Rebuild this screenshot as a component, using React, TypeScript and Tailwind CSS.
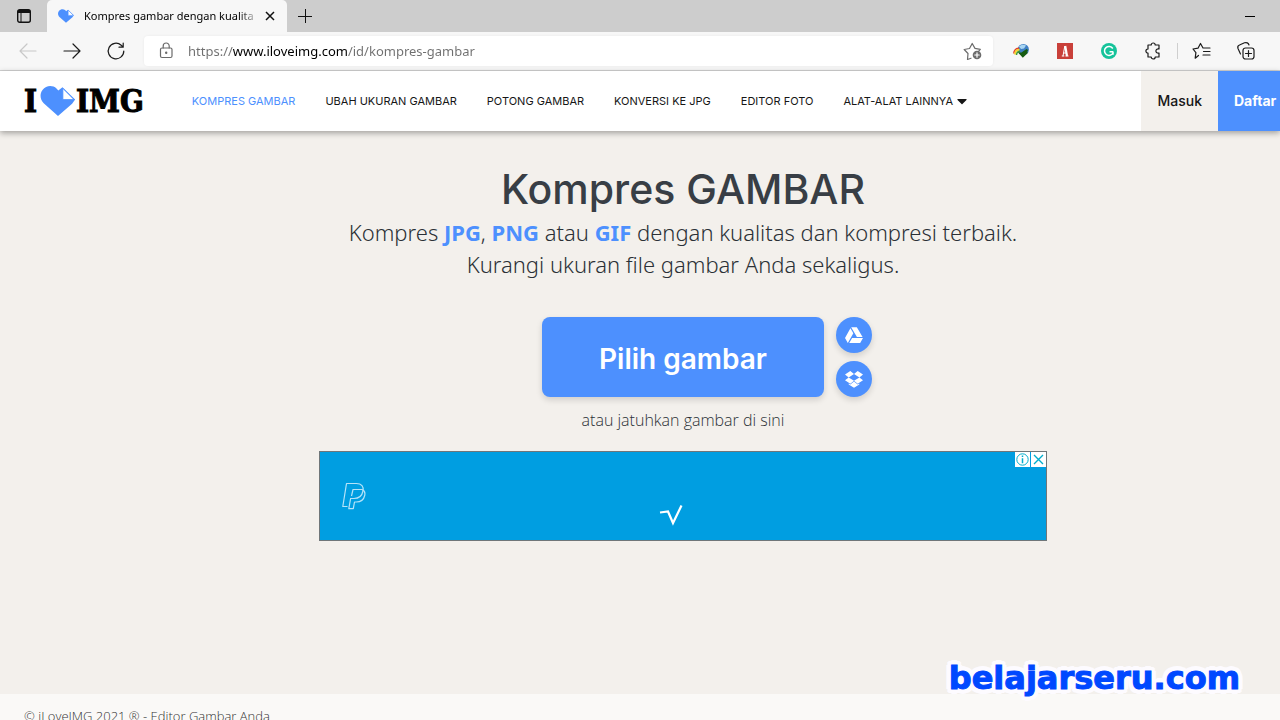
import type { ReactNode } from "react";
import { FaCaretDown, FaGoogleDrive } from "react-icons/fa";

const navLinks = [
  "UBAH UKURAN GAMBAR",
  "POTONG GAMBAR",
  "KONVERSI KE JPG",
  "EDITOR FOTO",
];

function Heart({ className }: { className?: string }) {
  return (
    <svg viewBox="0 0 35 30" className={className} aria-hidden="true">
      <path
        d="M17.5 30 3.2 17.2C-.6 13.6-.9 7.6 2 3.9 5.600-.6 12-1.100 16 2.500l1.800 2L22 1.200l12.600 12.300-3 4.200z"
        fill="#4d90fe"
      />
      <path d="M22.300 2.300v11.400h11.400z" fill="#fff" stroke="#4d90fe" strokeWidth="1" />
    </svg>
  );
}

function Stroke({ className, children }: { className?: string; children: ReactNode }) {
  return (
    <svg
      viewBox="0 0 20 20"
      className={className ?? "size-5"}
      fill="none"
      stroke="currentColor"
      strokeWidth="1.200"
      strokeLinecap="round"
      strokeLinejoin="round"
      aria-hidden="true"
    >
      {children}
    </svg>
  );
}

function IconButton({ label, children }: { label: string; children: ReactNode }) {
  return (
    <button type="button" aria-label={label} className="flex size-5 items-center justify-center">
      {children}
    </button>
  );
}

function TabStrip() {
  return (
    <div className="flex h-8 items-end bg-[#cdcdcd]">
      <div className="flex h-8 w-[47px] shrink-0 items-center justify-center">
        <IconButton label="Menu tindakan tab">
          <svg viewBox="0 0 14 14" className="size-3.5" aria-hidden="true">
            <rect x=".7" y=".7" width="12.600" height="12.600" rx="2" fill="none" stroke="#111" strokeWidth="1.400" />
            <path d="M1 1h12v3H1z" fill="#111" />
            <path d="M4 4v9" stroke="#111" strokeWidth="1" />
          </svg>
        </IconButton>
      </div>
      <div className="flex h-8 w-60 items-center rounded-t-[5px] bg-[#f7f7f7] pr-[7px] pl-[11px]">
        <Heart className="h-3.5 w-4 shrink-0" />
        <span className="ml-2.5 min-w-0 flex-1 font-['Noto_Sans',sans-serif] text-[11px] whitespace-nowrap text-black [mask-image:linear-gradient(to_right,#000_88%,transparent)]">
          Kompres gambar dengan kualita
        </span>
        <span className="flex">
          <IconButton label="Tutup tab">
            <svg viewBox="0 0 10 10" className="size-2.5" stroke="#111" strokeWidth="1.500" aria-hidden="true">
              <path d="m1 1 8 8M9 1 1 9" />
            </svg>
          </IconButton>
        </span>
      </div>
      <div className="flex h-8 flex-1 items-center justify-between pr-5 pl-2">
        <IconButton label="Tab baru">
          <svg viewBox="0 0 14 14" className="size-3.5" stroke="#111" strokeWidth="1" aria-hidden="true">
            <path d="M7.500 0v14M0 7.500h14" />
          </svg>
        </IconButton>
        <button type="button" aria-label="Minimalkan" className="flex h-5 w-5 items-center justify-center">
          <span className="h-px w-2.5 bg-black" />
        </button>
      </div>
    </div>
  );
}

function Toolbar() {
  return (
    <div className="flex h-[39px] items-center border-b border-[#d2d2d2] bg-[#f7f7f7] pr-6 pl-[18px] text-[#1b1b1b]">
      <div className="flex gap-6">
        <button type="button" aria-label="Kembali" className="text-[#c8c8c8]">
          <Stroke><path d="M18 10H2.500M9 3l-7 7 7 7" /></Stroke>
        </button>
        <button type="button" aria-label="Maju">
          <Stroke><path d="M2 10h15.500M11 3l7 7-7 7" /></Stroke>
        </button>
        <button type="button" aria-label="Muat ulang">
          <Stroke><path d="M17.800 10A7.800 7.800 0 1 1 15.200 4.200L17 6M17.200 2v4.200H13" /></Stroke>
        </button>
      </div>
      <div className="ml-[18px] flex h-[30px] flex-1 items-center rounded bg-white pr-2.5 pl-3 shadow-[0_0_3px_rgba(0,0,0,0.06)]">
        <Stroke className="size-5 shrink-0 text-[#6b6b6b]">
          <rect x="4.500" y="7" width="11.500" height="9.500" rx="1.500" />
          <path d="M7.200 7V5a3 3 0 0 1 6 0v2" />
          <circle cx="10.200" cy="11.700" r=".6" fill="currentColor" />
        </Stroke>
        <input
          type="text"
          aria-label="Alamat"
          defaultValue="https://www.iloveimg.com/id/kompres-gambar"
          className="ml-3 h-5 flex-1 bg-[linear-gradient(to_right,#6f6f6f_45px,#000_45px,#000_160px,#6f6f6f_160px)] bg-clip-text font-['Noto_Sans',sans-serif] text-[13px] leading-5 text-transparent outline-none"
        />
        <button type="button" aria-label="Tambahkan ke favorit" className="text-[#6b6b6b]">
          <Stroke>
            <path d="M8 17.200 4.500 18.500 5 12.500 1.200 8.500l5.300-1L9.200 2.500 12 7.400l5.300 1-2 2.200" />
            <circle cx="14" cy="14" r="4.300" fill="currentColor" stroke="none" />
            <path d="M14 11.800v4.400M11.800 14h4.400" stroke="#fff" />
          </Stroke>
        </button>
      </div>
      <div className="ml-[18px] flex items-center gap-6">
        <IconButton label="Internet Download Manager">
          <svg viewBox="0 0 16 16" className="size-4" aria-hidden="true">
            <circle cx="10.300" cy="6.500" r="5.600" fill="#3f7fc4" />
            <path d="M6 3.500c2-2 5-2.500 7-1L11 5.500 8 6z" fill="#a9d6f2" />
            <path d="M.8 10.500C.8 7.500 3 5 6 5.200" fill="none" stroke="#e0402c" strokeWidth="1.500" />
            <path d="M2 11.500C2 8.500 3.500 6.700 6.500 6.700" fill="none" stroke="#f6d22c" strokeWidth="1.700" />
            <path d="M3.500 12C3.500 10 4.500 8.400 7 8.400" fill="none" stroke="#3f9c35" strokeWidth="1.500" />
            <path d="M5 9.500h3.500l5-3.500 1.500 1-1 2.500h1.300L9.800 14.700z" fill="#175c12" />
          </svg>
        </IconButton>
        <IconButton label="Adobe Acrobat">
          <span className="flex size-4 items-center justify-center bg-[#c9403a]">
            <svg viewBox="0 0 16 16" className="size-4 fill-none stroke-white" aria-hidden="true">
              <path d="M8.200 3 10 13" strokeWidth="2.200" />
              <path d="M7.800 3 6 13M6.500 10h3M4.800 13h2.500M8.500 13h3" strokeWidth="1" />
            </svg>
          </span>
        </IconButton>
        <IconButton label="Grammarly">
          <svg viewBox="0 0 16 16" className="size-4" aria-hidden="true">
            <circle cx="8" cy="8" r="8" fill="#15c39a" />
            <path d="M11.800 5.500A4.500 4.500 0 1 0 12 10M12.300 8.700H8.500M12 8.700v3" fill="none" stroke="#fff" strokeWidth="1.500" />
          </svg>
        </IconButton>
        <IconButton label="Ekstensi">
          <Stroke>
            <path d="M5 4h3.200a2 2 0 0 1 4 0H16v4a2.200 2.200 0 1 0 0 4v4h-3.800a2 2 0 0 1-4 0H5v-3.800a2.100 2.100 0 0 1 0-4.200z" />
          </Stroke>
        </IconButton>
        <span className="-mx-2.5 h-4 w-px bg-[#cfcfcf]" />
        <IconButton label="Favorit">
          <Stroke>
            <path d="m6.500 14.500-3.300 2.700.7-5.500L1 8l5-.8L8.500 2.500 11 7h7M11.500 10.500H18M11 14h7" />
          </Stroke>
        </IconButton>
        <IconButton label="Koleksi">
          <Stroke>
            <rect x="7" y="7" width="11" height="11" rx="2.500" />
            <path d="M12.500 9.500v6M9.500 12.500h6M4.500 13 2 7.500C1.500 6 2 4.500 3.500 4l5-2.200c2-.7 4 .2 4.500 2.200" />
          </Stroke>
        </IconButton>
      </div>
    </div>
  );
}

function SiteHeader() {
  return (
    <header className="relative flex h-[60px] shrink-0 items-center bg-white pl-6 shadow-[0_2px_6px_rgba(0,0,0,0.35)]">
      <a
        href="#"
        aria-label="iLoveIMG"
        className="flex items-center font-['DejaVu_Serif_Condensed','DejaVu_Serif',serif] text-[31px] leading-none font-bold text-black [-webkit-text-stroke:1px_#000]"
      >
        <span>I</span>
        <Heart className="ml-[3px] h-[30px] w-9" />
        <span>IMG</span>
      </a>
      <nav className="ml-12 flex items-center gap-[30px] text-[11px] whitespace-nowrap text-[#161616]">
        <a href="#" className="text-[#4d90fe]">KOMPRES GAMBAR</a>
        {navLinks.map((label) => (
          <a key={label} href="#">{label}</a>
        ))}
        <button type="button" className="flex items-center gap-px">
          ALAT-ALAT LAINNYA
          <FaCaretDown className="size-4" />
        </button>
      </nav>
      <div className="ml-auto flex self-stretch text-sm">
        <a href="#" className="flex items-center bg-[#f3f0ec] px-4 font-medium text-[#161616]">
          Masuk
        </a>
        <a href="#" className="flex w-[62px] items-center overflow-hidden bg-[#4d90fe] pl-4 font-bold text-white">
          Daftar
        </a>
      </div>
    </header>
  );
}

function AdBanner() {
  return (
    <div className="mt-5 grid h-[90px] w-[728px] grid-cols-[1fr_auto_1fr] items-start border border-[#6f7679] bg-[#009ee1]">
      <svg viewBox="0 0 24 28" className="mt-[30px] ml-[22px] h-7 w-6" fill="none" stroke="#b5e3f8" strokeWidth="1.200" strokeLinejoin="round" aria-hidden="true">
        <path d="M5.500 24.500H.8L4.500 1.500h10c5 0 7.500 3 6.500 7.500-1 5-4.500 7.500-9 7.500H8.300" />
        <path d="M9.500 14 11 7.500h9c2.500 1 3.300 3.500 2.700 6-1 4.500-4 6.500-8.500 6.500h-1.700l-1.200 6.700H6.800L8.700 16.200" />
      </svg>
      <svg viewBox="0 0 24 22" className="mt-[52px] mr-6 h-[22px] w-6 fill-none stroke-white" strokeWidth="2.200" aria-hidden="true">
        <path d="M1 8.500 9 7.500l5 11.500L22.500 1.500" />
      </svg>
      <div className="flex gap-px justify-self-end text-[#00aecd]">
        <button type="button" aria-label="Info iklan" className="flex size-[15px] items-center justify-center bg-white">
          <svg viewBox="0 0 15 15" className="size-[15px]" fill="none" stroke="currentColor" aria-hidden="true">
            <circle cx="7.500" cy="7.500" r="5.700" />
            <path d="M7.500 3.500v1.500M7.500 6.200v5" strokeWidth="1.500" />
          </svg>
        </button>
        <button type="button" aria-label="Tutup iklan" className="flex size-[15px] items-center justify-center bg-white">
          <svg viewBox="0 0 15 15" className="size-[15px]" fill="none" stroke="currentColor" strokeWidth="1.400" aria-hidden="true">
            <path d="m3 3 9 9M12 3l-9 9" />
          </svg>
        </button>
      </div>
    </div>
  );
}

const roundButton =
  "flex size-9 items-center justify-center rounded-full bg-[#4d90fe] text-white shadow-[0_3px_6px_rgba(0,0,0,0.14)]";

function Uploader() {
  return (
    <main className="flex min-h-0 flex-1 flex-col items-center bg-[#f3f0ec] pt-8 pl-[86px] text-center text-[#2b3036]">
      <h1 className="text-[41px] leading-[52px] font-medium text-[#383e45]">Kompres GAMBAR</h1>
      <p className="mt-px font-['Noto_Sans',sans-serif] text-[22px] leading-8 font-light">
        Kompres <a href="#" className="font-bold text-[#4d90fe]">JPG</a>,{" "}
        <a href="#" className="font-bold text-[#4d90fe]">PNG</a> atau{" "}
        <a href="#" className="font-bold text-[#4d90fe]">GIF</a> dengan kualitas dan kompresi terbaik.
        <br />
        Kurangi ukuran file gambar Anda sekaligus.
      </p>
      <div className="mt-[37px] ml-12 flex gap-3">
        <button
          type="button"
          className="h-20 w-[282px] rounded-lg bg-[#4d90fe] pt-1 text-[28px] font-semibold text-white shadow-[0_3px_6px_rgba(0,0,0,0.14)]"
        >
          Pilih gambar
        </button>
        <div className="flex flex-col gap-2">
          <button type="button" aria-label="Pilih dari Google Drive" className={roundButton}>
            <FaGoogleDrive className="size-[18px]" />
          </button>
          <button type="button" aria-label="Pilih dari Dropbox" className={roundButton}>
            <svg viewBox="0 0 18 17" className="h-[17px] w-[18px] fill-current" aria-hidden="true">
              <path d="M5.300 0 0 3.500l3.700 2.900L9 3.100zM0 9.300l5.300 3.400L9 9.700 3.700 6.400zM9 9.700l3.700 3L18 9.300l-3.600-2.900zM18 3.500 12.700 0 9 3.100l5.400 3.300zM9 10.400l-3.700 3.100-1.600-1.100v1.200L9 16.800l5.300-3.200v-1.200l-1.600 1.100z" />
            </svg>
          </button>
        </div>
      </div>
      <p className="mt-3 font-['Open_Sans',sans-serif] text-base leading-[22px] font-light">
        atau jatuhkan gambar di sini
      </p>
      <AdBanner />
    </main>
  );
}

export default function App() {
  return (
    <div className="relative flex h-screen flex-col overflow-hidden font-['Inter',sans-serif]">
      <TabStrip />
      <Toolbar />
      <SiteHeader />
      <Uploader />
      <footer className="h-[26px] shrink-0 overflow-hidden bg-[#faf9f7] px-6 pt-3 font-['Open_Sans',sans-serif] text-[13px] leading-5 font-light text-[#333]">
        © iLoveIMG 2021 ® - Editor Gambar Anda
      </footer>
      <div className="absolute right-10 bottom-5 font-['DejaVu_Sans',sans-serif] text-[32px] leading-[44px] font-bold text-[#0048ff] [-webkit-text-stroke:1px_#0048ff] [text-shadow:5px_0_#fdfbff,4px_3px_#fdfbff,3px_4px_#fdfbff,0_5px_#fdfbff,-3px_4px_#fdfbff,-4px_3px_#fdfbff,-5px_0_#fdfbff,-4px_-3px_#fdfbff,-3px_-4px_#fdfbff,0_-5px_#fdfbff,3px_-4px_#fdfbff,4px_-3px_#fdfbff]">
        belajarseru.com
      </div>
    </div>
  );
}
